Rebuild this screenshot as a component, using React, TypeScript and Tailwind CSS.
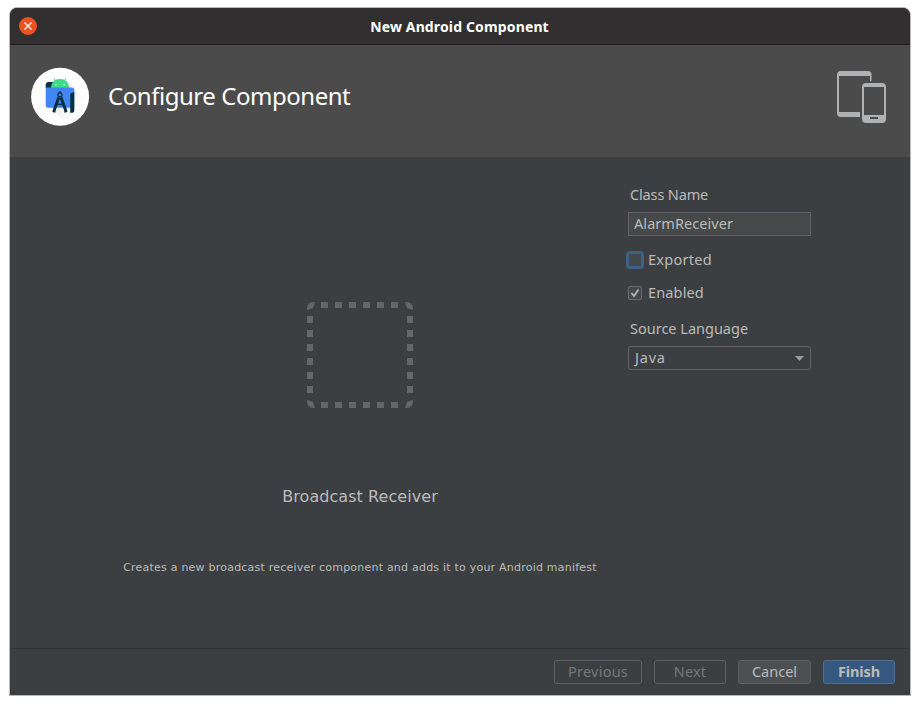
import type { ReactNode } from "react";

const offsets = [14, 28, 42, 56, 70, 84];

function StudioLogo() {
  return (
    <svg width="60" height="60" viewBox="0 0 60 60" className="block">
      <defs>
        <linearGradient id="fold" x1="0" y1="0" x2="1" y2="1">
          <stop offset="0" stopColor="#dedede" />
          <stop offset=".7" stopColor="#fff" />
        </linearGradient>
      </defs>
      <circle cx="30.100" cy="29.700" r="29" fill="#fff" />
      <path d="M37 14 L56 33 Q51 51 36 56 L25 46 Z" fill="url(#fold)" />
      <path d="M18.500 15 H25 V21 H15.700 V18 Q15.700 15 18.500 15Z" fill="#073042" />
      <path d="M20.800 21 Q21.500 12 30 12 Q38.500 12 39.200 21Z" fill="#3ddc84" />
      <path d="M25.600 14 L24.300 11.500 M34.400 14 L35.700 11.500" stroke="#3ddc84" strokeWidth="1" />
      <circle cx="26" cy="17.800" r=".8" fill="#fff" />
      <circle cx="34.200" cy="17.800" r=".8" fill="#fff" />
      <path d="M15.700 20.500 H42 Q44.200 20.500 44.200 23 V40.700 H17.700 Q15.700 40.700 15.700 38.700Z" fill="#4285f4" />
      <path d="M40.200 45.700 V27.500 Q40.200 25.700 42 25.700 Q43.500 25.700 44.300 24.500 V43.700 Q44.300 45.700 42.300 45.700Z" fill="#073042" />
      <path d="M28.800 30.500 L24.600 42 L23.800 45.300 M31 30.500 L35.200 42 L36 45.300" stroke="#073042" strokeWidth="3" fill="none" />
      <path d="M29.900 24 V26" stroke="#073042" strokeWidth="1.600" />
      <path d="M26 36.500 Q29.900 38.500 33.800 36.500" stroke="#073042" strokeWidth="1.600" fill="none" />
      <circle cx="29.900" cy="27.900" r="2" fill="#4285f4" stroke="#073042" strokeWidth="1.300" />
    </svg>
  );
}

function DevicesIcon() {
  return (
    <svg width="50" height="54" viewBox="0 0 50 54" className="block">
      <path fillRule="evenodd" fill="#afb1b3" d="M4 1H31Q34.500 1 34.500 4.500V11H33V6H2V42H23V47H4Q0 47 0 43V5Q0 1 4 1Z" />
      <path fillRule="evenodd" fill="#afb1b3" d="M29 13H45Q49 13 49 17V49Q49 53 45 53H29Q25 53 25 49V17Q25 13 29 13ZM27 17V45H47V17ZM33 47V49H41V47Z" />
    </svg>
  );
}

function ComponentOutline() {
  return (
    <svg width="106" height="106" viewBox="0 0 106 106" className="block" fill="#666">
      {offsets.map((o) => (
        <g key={o}>
          <rect x={o} y="0" width="7" height="6" />
          <rect x={o} y="100" width="7" height="6" />
          <rect x="0" y={o} width="6" height="7" />
          <rect x="100" y={o} width="6" height="7" />
        </g>
      ))}
      <path d="M0 7Q0 0 7 0H8L6 6L0 8ZM98 0H99Q106 0 106 7V8L100 6ZM106 98V99Q106 106 99 106H98L100 100ZM8 106H7Q0 106 0 99V98L6 100Z" />
    </svg>
  );
}

function DialogButton({ className, children }: { className: string; children: ReactNode }) {
  return (
    <button className={`h-[24px] rounded-[3px] border pb-[2px] text-[14.5px] leading-[20px] ${className}`}>{children}</button>
  );
}

export default function App() {
  return (
    <div className="h-[705px] w-[920px] bg-white pl-[9px] pt-[7px] font-['Noto_Sans',sans-serif] text-[14.5px] text-[#bbbbbb]">
      <div className="flex h-[689px] w-[902px] flex-col overflow-hidden rounded-t-[8px] border border-[#b9b9b9] bg-[#3c3f41]">
        <header className="grid h-[37px] shrink-0 grid-cols-[1fr_auto_1fr] items-center border-b border-[#1f1e1e] bg-[#322f30] pl-[9px]">
          <button aria-label="Close" className="flex size-[18px] items-center justify-center rounded-full bg-[#e95420]">
            <svg width="8" height="8" viewBox="0 0 8 8"><path d="M.5.500 7.500 7.500M7.500.500.500 7.500" stroke="#fff" strokeWidth="1.300" /></svg>
          </button>
          <h1 className="-ml-[10px] mt-[2px] text-[14px] font-bold leading-[20px] tracking-[0.14px] text-white">New Android Component</h1>
        </header>

        <section className="flex h-[112px] shrink-0 items-start bg-[#4b4b4b] pl-[20px] pr-[23px]">
          <div className="mt-[22px]"><StudioLogo /></div>
          <h2 className="ml-[18px] mt-[35px] text-[24px] leading-[32px] tracking-[-0.46px] text-white">Configure Component</h2>
          <div className="ml-auto mt-[25px]"><DevicesIcon /></div>
        </section>

        <main className="flex h-[491px] shrink-0">
          <section className="flex w-[618px] flex-col items-center font-['DejaVu_Sans',sans-serif]">
            <div className="mr-[-82px] flex w-[700px] flex-col items-center pt-[145px]">
              <ComponentOutline />
              <p className="mt-[79px] text-[16px] leading-[20px] tracking-[0.06px]">Broadcast Receiver</p>
              <p className="mt-[53px] whitespace-nowrap text-[11px] leading-[16px] tracking-[0.22px]">Creates a new broadcast receiver component and adds it to your Android manifest</p>
            </div>
          </section>
          <form className="w-[183px] pt-[27px]">
            <label className="block pl-[2px] leading-[20px] tracking-[-0.15px]">Class Name</label>
            <input readOnly value="AlarmReceiver" className="mt-[8px] block h-[24px] w-[183px] border border-[#646464] bg-[#45494a] px-[5px] pb-[2px] leading-[20px] tracking-[0.06px] outline-none" />
            <label className="mt-[14px] flex h-[20px] items-center">
              <span className="-ml-[2px] size-[18px] rounded-[4px] border-[3px] border-[#3d6185] bg-[#43494a]" />
              <span className="ml-[4px] tracking-[0.28px]">Exported</span>
            </label>
            <label className="mt-[13px] flex h-[20px] items-center">
              <span className="flex size-[14px] items-center justify-center rounded-[2px] border border-[#6b6b6b] bg-[#43494a]">
                <svg width="10" height="10" viewBox="0 0 10 10"><path d="M1.500 5 4 8 8.500 1.500" fill="none" stroke="#bbb" strokeWidth="1.700" /></svg>
              </span>
              <span className="ml-[6px] tracking-[0.14px]">Enabled</span>
            </label>
            <label className="mt-[15px] block pl-[2px] leading-[20px]">Source Language</label>
            <div className="mt-[8px] flex h-[24px] items-center justify-between rounded-[3px] border border-[#646464] pl-[6px] pr-[6px]">
              <span className="tracking-[0.8px]">Java</span>
              <svg width="9" height="5" viewBox="0 0 9 5"><path d="M0 0H9L4.500 5Z" fill="#9a9c9e" /></svg>
            </div>
          </form>
        </main>

        <footer className="flex h-[47px] shrink-0 justify-end border-t border-[#323232] pr-[15px] pt-[11px]">
          <DialogButton className="w-[88px] border-[#5e6060] tracking-[0.25px] text-[#777777]">Previous</DialogButton>
          <DialogButton className="ml-[12px] w-[72px] border-[#5e6060] tracking-[0.2px] text-[#777777]">Next</DialogButton>
          <DialogButton className="ml-[12px] w-[73px] border-[#5e6060] bg-[#4c5052] text-[#bbbbbb]">Cancel</DialogButton>
          <DialogButton className="ml-[12px] w-[72px] border-[#4c708c] bg-[#365880] font-bold tracking-[-0.15px] text-[#bbbbbb]">Finish</DialogButton>
        </footer>
      </div>
    </div>
  );
}
